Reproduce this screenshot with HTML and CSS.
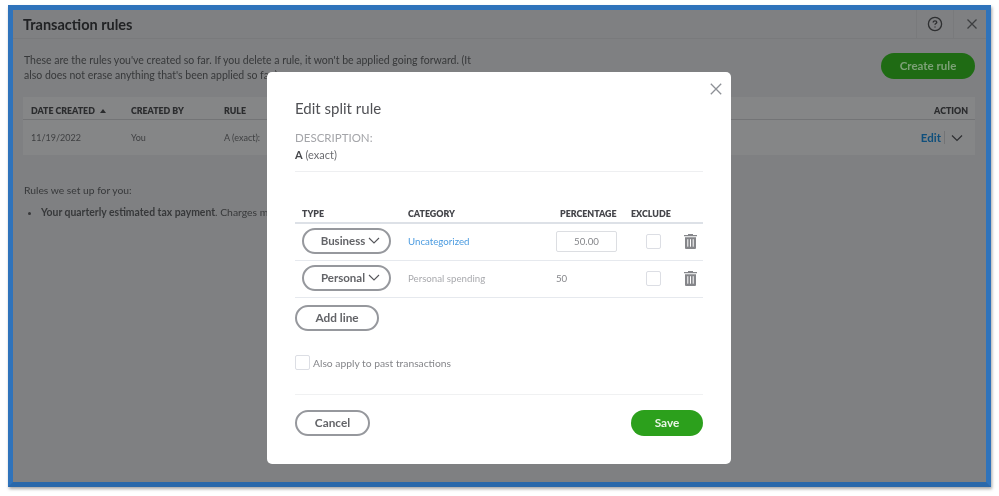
FILE: index.html
```html
<!DOCTYPE html>
<html>
<head>
    <link rel="stylesheet" href="styles.css">
</head>
<body>
    <div class="window">
        <div class="page-header">
            <h1 class="page-title">Transaction rules</h1>
            <div class="header-icons">
                <div class="header-icon">
                    <svg width="16" height="16" viewBox="0 0 16 16" fill="none" stroke="#2e2f31" stroke-width="1.3"><circle cx="8" cy="8" r="6.6"/><path d="M6.2 6.4c0-1 .8-1.6 1.8-1.6s1.8.6 1.8 1.5c0 1.2-1.8 1.3-1.8 2.5"/><path d="M8 10.4v1.1"/></svg>
                </div>
                <div class="header-icon header-close">
                    <svg width="12" height="12" viewBox="0 0 12 12" stroke="#3d3e40" stroke-width="1.3"><path d="M1.5 1.5l9 9M10.5 1.5l-9 9"/></svg>
                </div>
            </div>
        </div>

        <div class="page-body">
            <div class="intro">
                <p class="intro-text">These are the rules you've created so far. If you delete a rule, it won't be applied going forward. (It also does not erase anything that's been applied so far.)</p>
                <div class="create-rule">Create rule</div>
            </div>

            <div class="rules-table">
                <div class="rules-head">
                    <span class="col-date">DATE CREATED <i class="sort-arrow"></i></span>
                    <span class="col-by">CREATED BY</span>
                    <span class="col-rule">RULE</span>
                    <span class="col-action">ACTION</span>
                </div>
                <div class="rules-row">
                    <span class="col-date">11/19/2022</span>
                    <span class="col-by">You</span>
                    <span class="col-rule">A (exact):</span>
                    <span class="col-action row-action">
                        <a class="edit-link">Edit</a>
                        <svg width="12" height="8" viewBox="0 0 12 8" fill="none" stroke="#2e2f31" stroke-width="1.2"><path d="M1 1.5l5 5 5-5"/></svg>
                    </span>
                </div>
            </div>

            <p class="setup-title">Rules we set up for you:</p>
            <ul class="setup-list">
                <li><b>Your quarterly estimated tax payment</b>. Charges made</li>
            </ul>
        </div>

        <div class="modal">
            <svg class="modal-close" width="12" height="12" viewBox="0 0 12 12" stroke="#8d9096" stroke-width="1.3"><path d="M.8.8l10.4 10.4M11.2.8L.8 11.2"/></svg>
            <h2 class="modal-title">Edit split rule</h2>
            <div class="desc-label">DESCRIPTION:</div>
            <div class="desc-value"><b>A</b> (exact)</div>

            <div class="split-table">
                <div class="split-row split-head">
                    <span class="type-head">TYPE</span>
                    <span>CATEGORY</span>
                    <span class="pct-head">PERCENTAGE</span>
                    <span class="exclude-head">EXCLUDE</span>
                    <span></span>
                </div>
                <div class="split-row">
                    <div class="type-cell"><div class="pill pill-type">Business <svg width="12" height="7" viewBox="0 0 12 7" fill="none" stroke="#55565a" stroke-width="1.1"><path d="M1 1l5 5 5-5"/></svg></div></div>
                    <a class="cat-link">Uncategorized</a>
                    <div class="pct-input">50.00</div>
                    <div class="check-cell"><div class="checkbox"></div></div>
                    <svg class="trash" width="13" height="15" viewBox="0 0 13 15"><path fill="#85868a" d="M4 0h5v1h4v1.3H0V1h4zM1 3.2h11V14a1 1 0 0 1-1 1H2a1 1 0 0 1-1-1z"/><path stroke="#fff" d="M3.8 5.2v7.5M6.5 5.2v7.5M9.2 5.2v7.5"/></svg>
                </div>
                <div class="split-row">
                    <div class="type-cell"><div class="pill pill-type">Personal <svg width="12" height="7" viewBox="0 0 12 7" fill="none" stroke="#55565a" stroke-width="1.1"><path d="M1 1l5 5 5-5"/></svg></div></div>
                    <span class="cat-text">Personal spending</span>
                    <span class="pct-text">50</span>
                    <div class="check-cell"><div class="checkbox"></div></div>
                    <svg class="trash" width="13" height="15" viewBox="0 0 13 15"><path fill="#85868a" d="M4 0h5v1h4v1.3H0V1h4zM1 3.2h11V14a1 1 0 0 1-1 1H2a1 1 0 0 1-1-1z"/><path stroke="#fff" d="M3.8 5.2v7.5M6.5 5.2v7.5M9.2 5.2v7.5"/></svg>
                </div>
            </div>

            <div class="pill pill-add">Add line</div>

            <label class="past-option"><span class="checkbox"></span> Also apply to past transactions</label>

            <div class="modal-footer">
                <div class="pill pill-cancel">Cancel</div>
                <div class="pill pill-save">Save</div>
            </div>
        </div>
    </div>
</body>
</html>
```

FILE: styles.css
```css
* {
    box-sizing: border-box;
}
html, body {
    margin: 0;
    height: 100%;
}
body {
    background: #fff;
    padding: 5px 8px;
    font-family: "Lato", "Open Sans", sans-serif;
    overflow: hidden;
}
.window {
    width: 983px;
    height: 482px;
    border: 5px solid #2f73bb;
    border-bottom-color: #2a68aa;
    background: #7f8082;
    position: relative;
    box-shadow: 1px 2px 3px rgba(0, 0, 0, .35);
    color: #2b2c2e;
}

/* page behind the dialog */
.page-header {
    height: 29px;
    display: flex;
    justify-content: space-between;
    border-bottom: 1px solid #797a7c;
    padding-left: 10px;
}
.page-title {
    margin: 0;
    font-size: 14.5px;
    line-height: 29px;
    font-weight: 700;
    color: #212224;
    filter: blur(.4px);
}
.header-icons {
    display: flex;
}
.header-icon {
    width: 37px;
    display: flex;
    align-items: center;
    justify-content: center;
    border-left: 1px solid #797a7c;
    filter: blur(.4px);
}
.header-close {
    width: 33px;
    padding-left: 3px;
}
.page-body {
    padding: 14px 11px 0 10px;
    filter: blur(.5px);
}
.intro {
    display: flex;
    justify-content: space-between;
    height: 44px;
}
.intro-text {
    margin: 0 0 0 1px;
    width: 462px;
    font-size: 10.5px;
    line-height: 14.5px;
    color: #37383a;
}
.create-rule {
    width: 94px;
    height: 26px;
    border-radius: 13px;
    background: #1f6b14;
    color: #7da177;
    font-size: 11.5px;
    font-weight: 700;
    text-align: center;
    line-height: 25px;
}
.rules-table {
    background: #858687;
    font-size: 9px;
}
.rules-head, .rules-row {
    display: flex;
    align-items: center;
    padding: 0 7px 0 8px;
}
.rules-head {
    height: 23px;
    padding-top: 4px;
    font-size: 8.8px;
    font-weight: 800;
    border-bottom: 1px solid #737476;
}
.rules-row {
    height: 35px;
    color: #3e3f41;
}
.col-date {
    width: 100px;
}
.col-by {
    width: 93px;
}
.col-rule {
    flex: 1;
}
.col-action {
    display: flex;
    align-items: center;
    gap: 6px;
}
.row-action {
    margin-right: 5px;
}
.sort-arrow {
    display: inline-block;
    margin-left: 3px;
    border: 3px solid transparent;
    border-top: 0;
    border-bottom: 4px solid #2b2c2e;
    vertical-align: 1px;
}
.edit-link {
    color: #0f4f7c;
    font-size: 11.5px;
    font-weight: 700;
    padding-right: 3px;
    border-right: 1px solid #737476;
}
.setup-title {
    margin: 29px 0 0 1px;
    font-size: 10.3px;
    color: #37383a;
}
.setup-list {
    margin: 10px 0 0;
    padding-left: 18px;
    font-size: 10.4px;
    color: #37383a;
}

/* dialog */
.modal {
    position: absolute;
    left: 254px;
    top: 62px;
    width: 464px;
    height: 392px;
    background: #fff;
    border-radius: 5px;
    padding: 0 28px;
    color: #4a4b4f;
    filter: blur(.4px);
}
.modal-close {
    position: absolute;
    top: 11px;
    right: 9px;
}
.modal-title {
    margin: 26px 0 0;
    font-size: 15px;
    line-height: 20px;
    font-weight: 400;
    color: #505155;
}
.desc-label {
    margin-top: 12px;
    font-size: 11.5px;
    line-height: 15px;
    color: #a4a5a9;
}
.desc-value {
    margin-top: 3px;
    padding-bottom: 10px;
    font-size: 11px;
    line-height: 13px;
    color: #6b6c70;
    border-bottom: 1px solid #eeeff1;
}
.desc-value b {
    color: #47484c;
}
.split-table {
    margin-top: 31px;
}
.split-row {
    display: grid;
    grid-template-columns: 113px 148px 75px 55px 1fr;
    align-items: center;
    height: 37px;
    padding-bottom: 2px;
    border-bottom: 1px solid #e6e9ee;
}
.split-head {
    height: 21px;
    padding-bottom: 0;
    padding-top: 1px;
    border-bottom: 2px solid #dde1e7;
    font-size: 8.9px;
    font-weight: 800;
    color: #44454a;
}
.type-head {
    padding-left: 7px;
}
.pct-head {
    padding-left: 4px;
}
.exclude-head {
    white-space: nowrap;
}
.type-cell {
    padding-left: 7px;
}
.pill {
    display: flex;
    align-items: center;
    justify-content: center;
    height: 26px;
    padding-bottom: 1px;
    border-radius: 13px;
    border: 2px solid #96989d;
    font-size: 11.8px;
    font-weight: 700;
    color: #636468;
}
.pill-type {
    width: 89px;
    padding-left: 8px;
    gap: 3px;
    font-size: 11.5px;
}
.cat-link {
    font-size: 9.7px;
    color: #4b9be0;
}
.cat-text {
    font-size: 9.7px;
    color: #a9aaae;
}
.pct-input {
    width: 61px;
    height: 21px;
    border: 1px solid #dcdee2;
    border-radius: 2px;
    text-align: center;
    font-size: 9.7px;
    line-height: 19px;
    color: #85868a;
}
.pct-text {
    font-size: 9.7px;
    color: #85868a;
}
.check-cell {
    padding-left: 15px;
}
.checkbox {
    display: block;
    width: 15px;
    height: 15px;
    border: 1px solid #dcdee4;
    border-radius: 2px;
    background: #fff;
}
.trash {
    margin-left: -2px;
}
.pill-add {
    width: 84px;
    margin-top: 7px;
}
.past-option {
    display: flex;
    align-items: center;
    gap: 3px;
    margin-top: 24px;
    font-size: 10.3px;
    color: #85868a;
}
.modal-footer {
    display: flex;
    justify-content: space-between;
    margin-top: 24px;
    padding-top: 15px;
    border-top: 1px solid #f0f1f2;
}
.pill-cancel {
    width: 75px;
}
.pill-save {
    width: 72px;
    border: 0;
    background: #2ca01c;
    color: #e8f5e6;
}
```
